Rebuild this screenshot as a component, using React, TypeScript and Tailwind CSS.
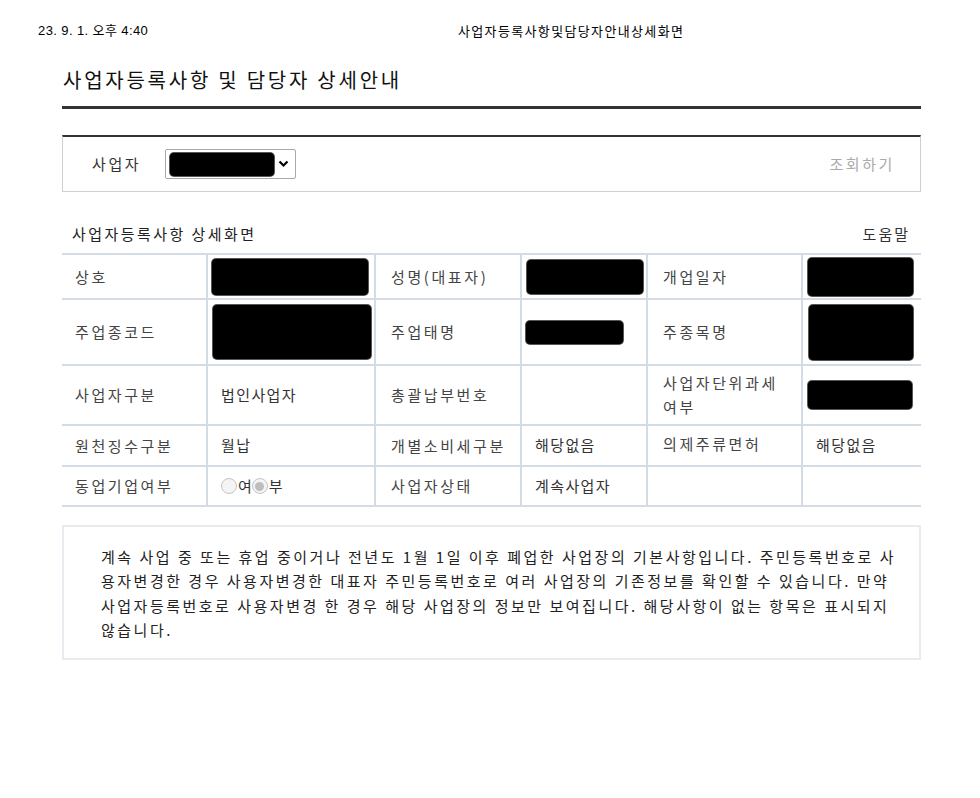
import React from 'react';

const font = { fontFamily: '"Noto Sans CJK KR", "Noto Sans", sans-serif' };

// Redaction block (black marker over private data)
const Redact = ({ w, h, className = '' }: { w: number; h: number; className?: string }) => (
  <div
    className={`bg-black rounded-[4px] ring-1 ring-[#555] ${className}`}
    style={{ width: w, height: h }}
  />
);

const Radio = ({ checked }: { checked?: boolean }) => (
  <span className="inline-flex items-center justify-center w-[16px] h-[16px] rounded-full border border-[#c4c4c4] bg-[#f4f4f4]">
    {checked && <span className="w-[9px] h-[9px] rounded-full bg-[#bdbdbd]" />}
  </span>
);

const Label = ({ children }: { children: React.ReactNode }) => (
  <td className="px-[13px] text-[15px] tracking-[2.6px] text-[#444] align-middle leading-[24px]">{children}</td>
);

const Value = ({ children }: { children?: React.ReactNode }) => (
  <td className="px-[13px] text-[15px] tracking-[1.4px] text-[#333] align-middle">{children}</td>
);

export default function App() {
  return (
    <div className="w-[980px] h-[798px] bg-white overflow-hidden" style={font}>
      {/* print header */}
      <div className="flex items-center h-[16px] mt-[23px] text-[13px] text-black">
        <span
          className="ml-[38px] w-[420px] tracking-[0.4px]"
          style={{ fontFamily: '"Liberation Sans", "Noto Sans CJK KR", sans-serif' }}
        >
          23. 9. 1. 오후 4:40
        </span>
        <span className="tracking-[1.35px]">사업자등록사항및담당자안내상세화면</span>
      </div>

      <div className="ml-[62px] w-[859px]">
        <h1 className="mt-[27px] ml-[1px] text-[20px] leading-[28px] tracking-[2.75px] text-[#111] font-normal">
          사업자등록사항 및 담당자 상세안내
        </h1>
        <div className="mt-[12px] h-[3px] bg-[#333]" />

        {/* search box */}
        <div className="mt-[26px] h-[57px] border-t-2 border-t-[#333] border-x border-b border-[#cfcfcf] flex items-center">
          <span className="ml-[29px] text-[15px] tracking-[2.6px] text-[#333]">사업자</span>
          <div className="ml-[24px] w-[131px] h-[30px] border border-[#a9a9a9] rounded-[2px] flex items-center pl-[4px] pr-[6px]">
            <Redact w={104} h={23} />
            <svg className="ml-auto" width="11" height="8" viewBox="0 0 11 8">
              <path d="M1.5 1.5 L5.5 5.5 L9.5 1.5" fill="none" stroke="#000" strokeWidth="2.2" />
            </svg>
          </div>
          <span className="ml-auto mr-[25px] text-[15px] tracking-[2.6px] text-[#aaa]">조회하기</span>
        </div>

        {/* section title */}
        <div className="mt-[31px] flex items-center h-[22px]">
          <span className="ml-[10px] text-[15px] tracking-[2.45px] text-[#222]">사업자등록사항 상세화면</span>
          <span className="ml-auto mr-[11px] text-[15px] tracking-[2px] text-[#333]">도움말</span>
        </div>

        {/* detail table */}
        <table className="mt-[8px] w-[859px] table-fixed border-collapse">
          <colgroup>
            <col className="w-[145px]" />
            <col className="w-[168px]" />
            <col className="w-[146px]" />
            <col className="w-[126px]" />
            <col className="w-[155px]" />
            <col className="w-[119px]" />
          </colgroup>
          <tbody className="[&_td]:border-2 [&_td]:border-[#d3dce5] [&_td:first-child]:border-l-0 [&_td:last-child]:border-r-0">
            <tr className="h-[45px]">
              <Label>상호</Label>
              <td className="pl-[4px]"><Redact w={156} h={36} /></td>
              <Label><span className="ml-[2px]">성명(대표자)</span></Label>
              <td className="pl-[5px]"><Redact w={116} h={34} /></td>
              <Label><span className="ml-[2px]">개업일자</span></Label>
              <td className="pl-[5px]"><Redact w={105} h={38} /></td>
            </tr>
            <tr className="h-[66px]">
              <Label>주업종코드</Label>
              <td className="pl-[5px]"><Redact w={158} h={54} /></td>
              <Label><span className="ml-[2px]">주업태명</span></Label>
              <td className="pl-[4px]"><Redact w={97} h={23} /></td>
              <Label><span className="ml-[2px]">주종목명</span></Label>
              <td className="pl-[6px]"><Redact w={104} h={55} /></td>
            </tr>
            <tr className="h-[60px]">
              <Label>사업자구분</Label>
              <Value>법인사업자</Value>
              <Label><span className="ml-[2px]">총괄납부번호</span></Label>
              <Value />
              <Label>
                <span className="block ml-[2px]">사업자단위과세</span>
                <span className="block ml-[2px]">여부</span>
              </Label>
              <td className="pl-[5px]"><Redact w={104} h={28} /></td>
            </tr>
            <tr className="h-[41px]">
              <Label>원천징수구분</Label>
              <Value>월납</Value>
              <Label><span className="ml-[2px]">개별소비세구분</span></Label>
              <Value>해당없음</Value>
              <Label><span className="ml-[2px] relative -top-[2px]">의제주류면허</span></Label>
              <Value>해당없음</Value>
            </tr>
            <tr className="h-[40px]">
              <Label>동업기업여부</Label>
              <td className="px-[13px] text-[15px] text-[#333] align-middle">
                <span className="flex items-center">
                  <Radio />
                  <span className="ml-[1px]">여</span>
                  <Radio checked />
                  <span className="ml-[1px]">부</span>
                </span>
              </td>
              <Label><span className="ml-[2px]">사업자상태</span></Label>
              <Value>계속사업자</Value>
              <Value />
              <Value />
            </tr>
          </tbody>
        </table>

        {/* notice */}
        <div className="mt-[18px] h-[135px] border-2 border-[#e8ecf0] pt-[18px] pl-[37px] text-[15px] leading-[24.4px] tracking-[2.5px] text-[#222] whitespace-nowrap">
          <div>계속 사업 중 또는 휴업 중이거나 전년도 1월 1일 이후 폐업한 사업장의 기본사항입니다. 주민등록번호로 사</div>
          <div>용자변경한 경우 사용자변경한 대표자 주민등록번호로 여러 사업장의 기존정보를 확인할 수 있습니다. 만약</div>
          <div>사업자등록번호로 사용자변경 한 경우 해당 사업장의 정보만 보여집니다. 해당사항이 없는 항목은 표시되지</div>
          <div>않습니다.</div>
        </div>
      </div>
    </div>
  );
}
